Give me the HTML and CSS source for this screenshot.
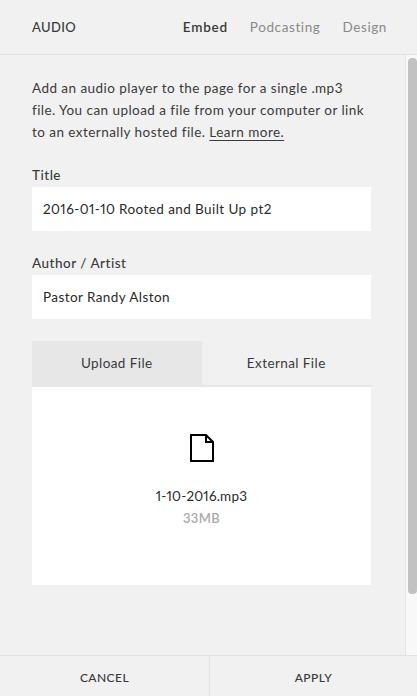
FILE: index.html
```html
<!DOCTYPE html>
<html lang="en">
<head>
    <meta charset="UTF-8">
    <meta name="viewport" content="width=device-width, initial-scale=1.0">
    <title>Audio Block</title>
    <link rel="stylesheet" href="styles.css">
</head>
<body>

    <div class="dialog">
        <!-- Header -->
        <div class="header">
            <div class="header-title">AUDIO</div>
            <div class="header-tabs">
                <span class="header-tab active">Embed</span>
                <span class="header-tab">Podcasting</span>
                <span class="header-tab">Design</span>
            </div>
        </div>

        <!-- Body -->
        <div class="body">
            <div class="content">
                <p class="intro">Add an audio player to the page for a single .mp3<br>file. You can upload a file from your computer or link<br>to an externally hosted file. <span class="learn-more">Learn more.</span></p>

                <div class="field">
                    <div class="field-label">Title</div>
                    <div class="field-input">2016-01-10 Rooted and Built Up pt2</div>
                </div>

                <div class="field">
                    <div class="field-label">Author / Artist</div>
                    <div class="field-input">Pastor Randy Alston</div>
                </div>

                <div class="source-tabs">
                    <div class="source-tab active">Upload File</div>
                    <div class="source-tab">External File</div>
                </div>

                <div class="file-panel">
                    <svg class="file-icon" width="26" height="30" viewBox="0 0 26 30">
                        <path d="M2 2H17L24 9V28H2Z" fill="none" stroke="#000" stroke-width="2"/>
                        <path d="M17 2V9H24" fill="none" stroke="#000" stroke-width="2"/>
                    </svg>
                    <div class="file-name">1-10-2016.mp3</div>
                    <div class="file-size">33MB</div>
                </div>
            </div>

            <div class="scrollbar">
                <div class="scrollbar-thumb"></div>
            </div>
        </div>

        <!-- Footer -->
        <div class="footer">
            <div class="footer-btn">CANCEL</div>
            <div class="footer-btn">APPLY</div>
        </div>
    </div>

</body>
</html>
```

FILE: styles.css
```css
* {
    margin: 0;
    padding: 0;
    box-sizing: border-box;
}

body, html {
    height: 100%;
    font-family: 'Lato', sans-serif;
    font-variant-numeric: proportional-nums;
    background-color: #f1f1f1;
    color: #3a3a3a;
    overflow: hidden;
}

.dialog {
    height: 696px;
    display: flex;
    flex-direction: column;
}

.header {
    height: 55px;
    padding: 0 30px 0 32px;
    border-bottom: 1px solid #e2e2e2;
    display: flex;
    align-items: center;
    justify-content: space-between;
}

.header-title {
    font-size: 13px;
    font-weight: 500;
    letter-spacing: 0.35px;
    color: #3a3a3a;
}

.header-tabs {
    display: flex;
    gap: 22px;
}

.header-tab {
    font-size: 13.5px;
    letter-spacing: 0.6px;
    color: #8a8a8a;
}

.header-tab.active {
    font-weight: 600;
    letter-spacing: 0.75px;
    color: #3a3a3a;
}

.body {
    flex: 1;
    display: flex;
    min-height: 0;
}

.content {
    flex: 1;
    padding: 22px 34px 0 32px;
}

.intro {
    font-size: 13.5px;
    line-height: 22px;
    letter-spacing: 0.45px;
    color: #3a3a3a;
}

.learn-more {
    text-decoration: underline;
    text-decoration-thickness: 1px;
    text-underline-offset: 3px;
}

.field {
    margin-top: 21px;
}

.field-label {
    height: 23px;
    font-size: 13.5px;
    line-height: 23px;
    font-weight: 500;
    letter-spacing: 0.5px;
    color: #3a3a3a;
}

.field-input {
    height: 44px;
    padding: 0 11px;
    background: #fff;
    font-size: 13.5px;
    line-height: 44px;
    letter-spacing: 0.42px;
    color: #2a2a2a;
}

.source-tabs {
    margin-top: 22px;
    display: flex;
    height: 46px;
    border-bottom: 2px solid #e7e7e7;
}

.source-tab {
    flex: 1;
    font-size: 13.5px;
    line-height: 44px;
    letter-spacing: 0.42px;
    text-align: center;
    color: #3a3a3a;
}

.source-tab.active {
    background: #e7e7e7;
}

.file-panel {
    height: 198px;
    background: #fff;
    display: flex;
    flex-direction: column;
    align-items: center;
    padding-top: 46px;
}

.file-icon {
    display: block;
    margin-left: 1px;
}

.file-name {
    margin-top: 22px;
    font-size: 13.5px;
    line-height: 22px;
    letter-spacing: 0.2px;
    color: #2a2a2a;
}

.file-size {
    font-size: 13px;
    line-height: 22px;
    font-weight: 600;
    letter-spacing: 0.3px;
    color: #aaa;
}

.scrollbar {
    width: 12px;
    padding: 3px 0 0 2px;
    background: #f8f8f8;
    border-left: 1px solid #e6e6e6;
}

.scrollbar-thumb {
    height: 536px;
    border-radius: 4px;
    background: #c2c2c2;
}

.footer {
    height: 41px;
    border-top: 1px solid #e2e2e2;
    display: grid;
    grid-template-columns: 209px 1fr;
}

.footer-btn {
    font-size: 12px;
    font-weight: 500;
    line-height: 44px;
    letter-spacing: 0.45px;
    text-align: center;
    color: #3a3a3a;
}

.footer-btn + .footer-btn {
    border-left: 1px solid #e2e2e2;
}
```
